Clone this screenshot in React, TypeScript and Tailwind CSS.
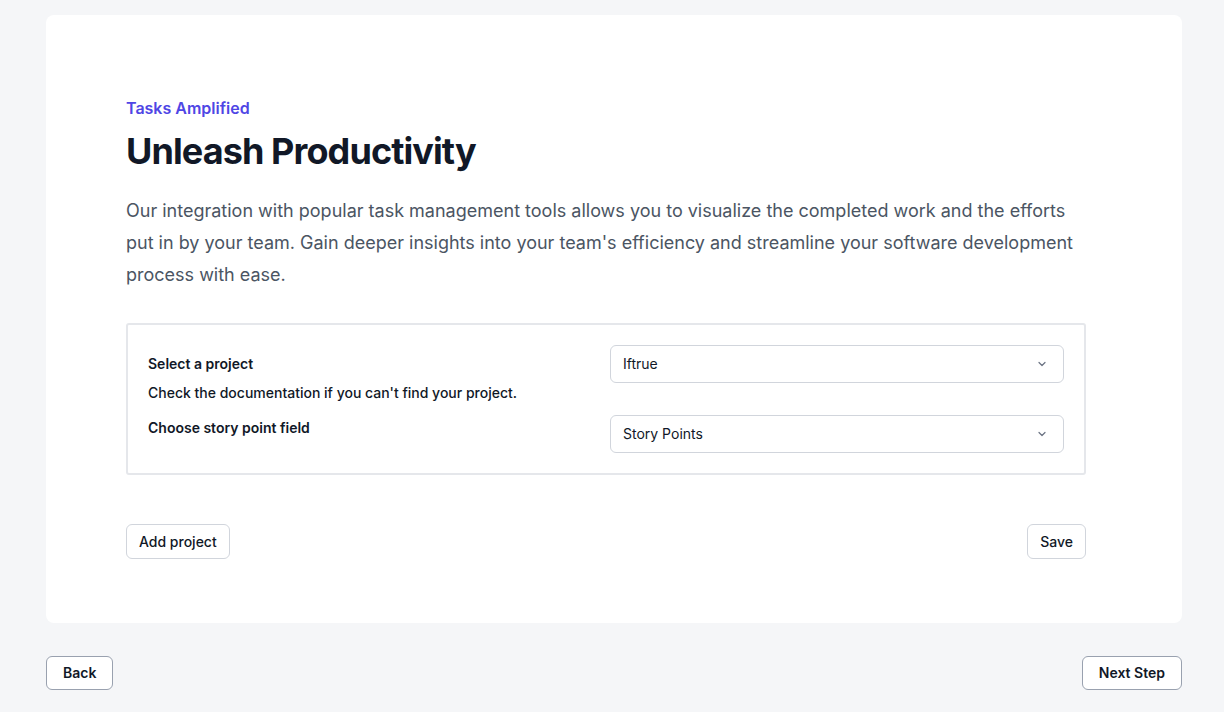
import React from "react";

function Chevron() {
  return (
    <svg width="10" height="10" viewBox="0 0 10 10" fill="none" className="text-gray-500">
      <path d="M2 3.5L5 6.5L8 3.5" stroke="currentColor" strokeWidth="1.2" strokeLinecap="round" strokeLinejoin="round" />
    </svg>
  );
}

function Select({ value }: { value: string }) {
  return (
    <div className="flex h-[38px] items-center justify-between rounded-md border border-gray-300 bg-white pl-3 pr-4 text-sm text-gray-900">
      <span>{value}</span>
      <Chevron />
    </div>
  );
}

export default function App() {
  return (
    <div
      className="min-h-[712px] bg-[#f5f6f8] pl-[46px] pr-[42px] pt-[15px] pb-[23px]"
      style={{ fontFamily: "Inter, 'Noto Sans', sans-serif" }}
    >
      <div className="rounded-lg bg-white pl-[80px] pr-[96px] pt-[81px] pb-[64px]">
        <div className="text-base font-semibold leading-6 text-[#4f46e5]">Tasks Amplified</div>
        <h1 className="mt-[11px] text-[36px] font-bold leading-[40px] tracking-tight text-[#111827]">
          Unleash Productivity
        </h1>
        <p className="mt-6 text-[18px] leading-8 text-[#4b5563]">
          Our integration with popular task management tools allows you to visualize the completed work and the efforts
          put in by your team. Gain deeper insights into your team's efficiency and streamline your software development
          process with ease.
        </p>
        <div className="mt-8 rounded-[3px] border-2 border-gray-200 p-[20px]">
          <div className="grid grid-cols-2 gap-2">
            <div className="text-sm text-[#111827]">
              <div className="mt-[9px] font-semibold leading-5">Select a project</div>
              <div className="mt-[9px] font-medium leading-5">Check the documentation if you can't find your project.</div>
              <div className="mt-[15px] font-semibold leading-5">Choose story point field</div>
            </div>
            <div className="flex flex-col gap-8">
              <Select value="Iftrue" />
              <Select value="Story Points" />
            </div>
          </div>
        </div>
        <div className="mt-[49px] flex justify-between">
          <button className="h-[35px] rounded-md border border-gray-300 bg-white px-3 text-sm font-medium text-[#111827]">
            Add project
          </button>
          <button className="h-[35px] rounded-md border border-gray-300 bg-white px-3 text-sm font-medium text-[#111827]">
            Save
          </button>
        </div>
      </div>
      <div className="mt-[33px] flex justify-between">
        <button className="h-[34px] rounded-md border border-gray-400 bg-white px-4 text-sm font-semibold text-[#111827]">
          Back
        </button>
        <button className="h-[34px] rounded-md border border-gray-400 bg-white px-4 text-sm font-semibold text-[#111827]">
          Next Step
        </button>
      </div>
    </div>
  );
}
